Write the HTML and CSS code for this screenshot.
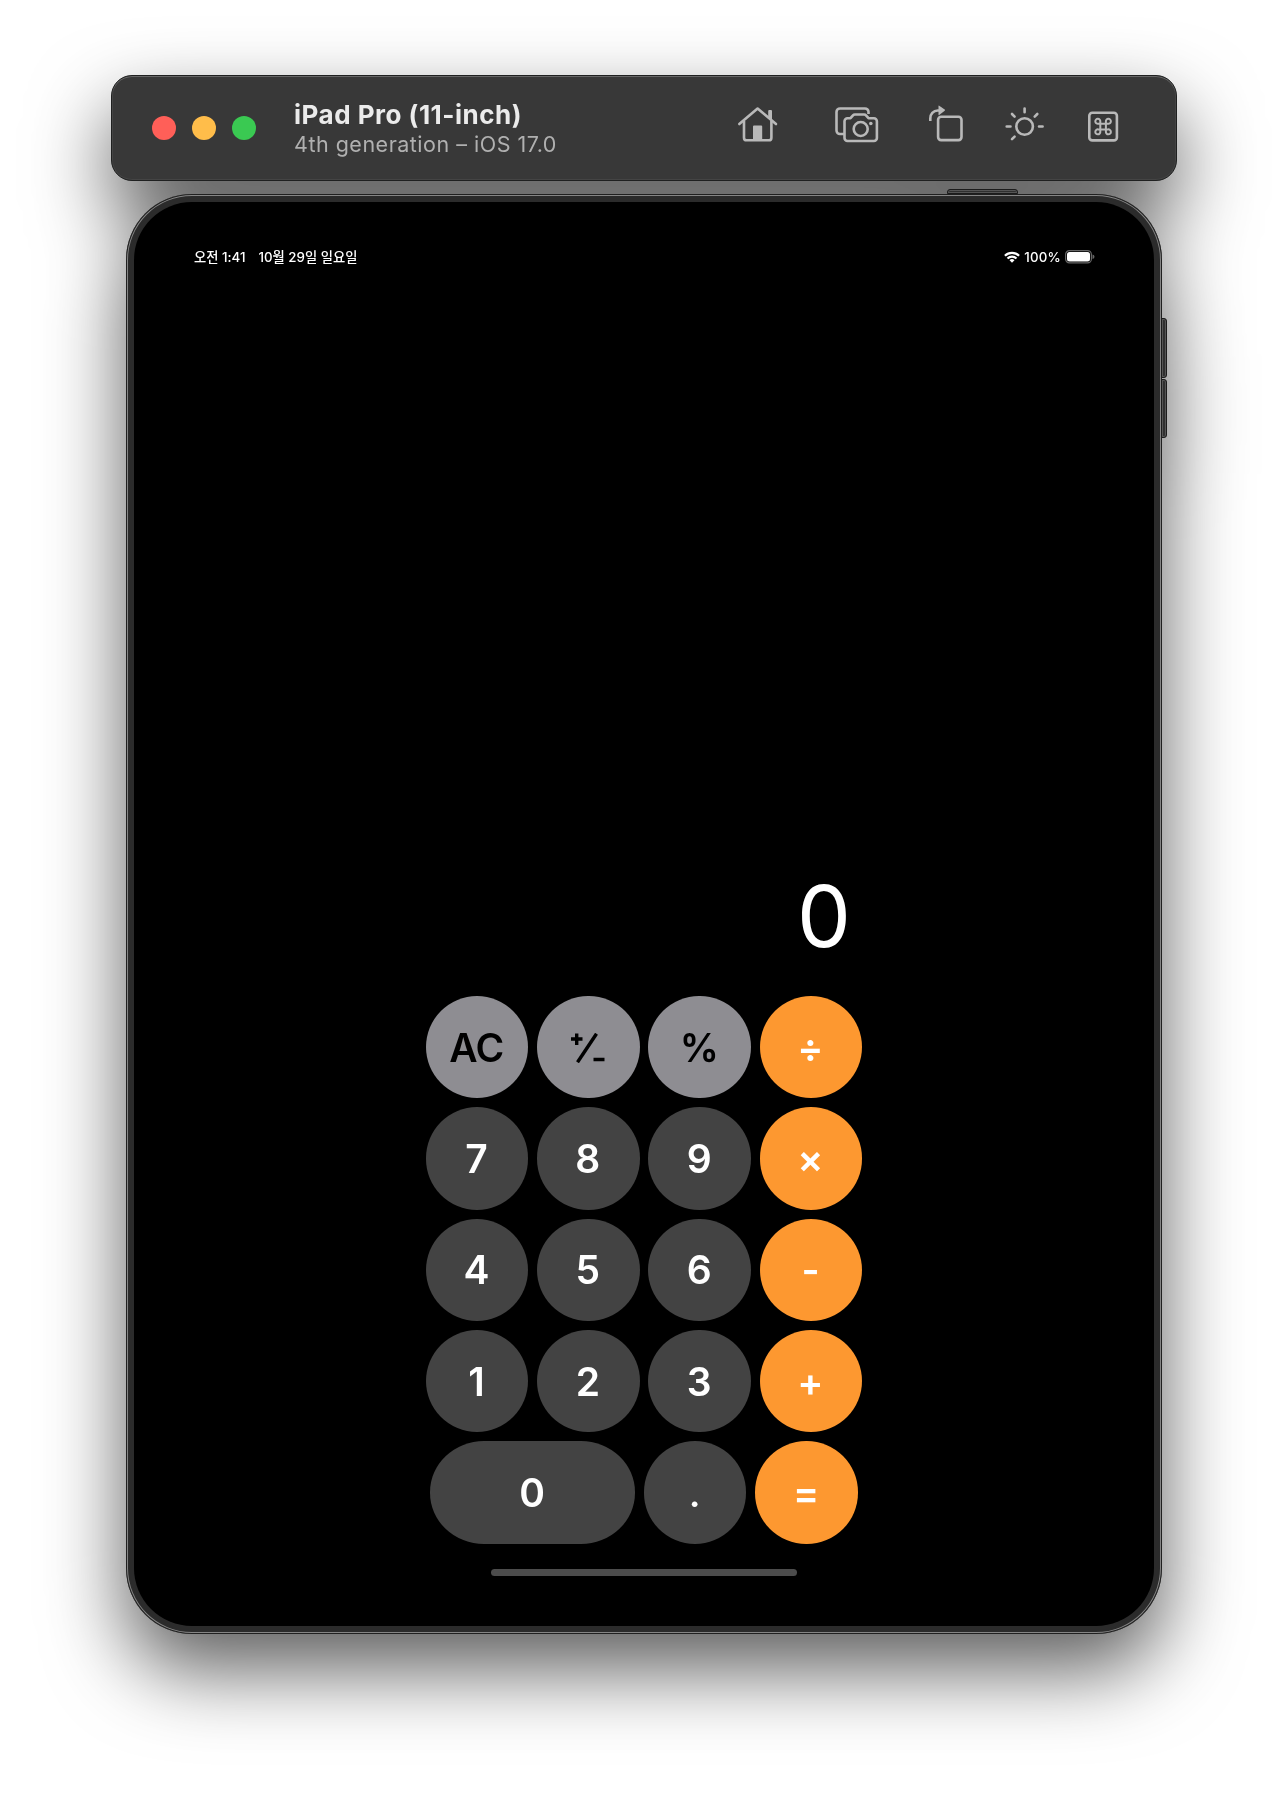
FILE: index.html
```html
<!DOCTYPE html>
<html lang="ko">
<head>
<meta charset="utf-8">
<title>Calculator</title>
<link rel="stylesheet" href="styles.css">
</head>
<body>
<main class="simulator">
  <header class="titlebar">
    <div class="lights"><span class="light close"></span><span class="light minimize"></span><span class="light expand"></span></div>
    <div class="titles">
      <h1 class="title">iPad Pro (11-inch)</h1>
      <p class="subtitle">4th generation – iOS 17.0</p>
    </div>
    <nav class="tools">
      <svg class="tool" width="40" height="40" viewBox="0 0 40 40"><path stroke-linecap="round" stroke-linejoin="round" d="M1.300 18 19.600 2.500 38 18"/><path d="M6 15V31.700a2.600 2.600 0 0 0 2.600 2.600H30.800a2.600 2.600 0 0 0 2.600-2.600V15"/><path class="solid" d="M15 20.500a1 1 0 0 1 1-1H23.200a1 1 0 0 1 1 1V34H15ZM30.200 5a1 1 0 0 1 1-1H33a1 1 0 0 1 1 1V15L30.200 12Z"/></svg>
      <svg class="tool camera" width="44" height="40" viewBox="0 0 44 40"><path d="M9 28H5a3.500 3.500 0 0 1-3.500-3.500V6A3.500 3.500 0 0 1 5 2.500H30A3.500 3.500 0 0 1 33.500 6V8"/><path stroke-linejoin="round" d="M12.500 12.200H15.500L18 9.300Q18.700 8.500 19.800 8.500H29.200Q30.300 8.500 31 9.300L33.500 12.200H38.900A3 3 0 0 1 41.900 15.200V32A3 3 0 0 1 38.900 35H12.500A3 3 0 0 1 9.500 32V15.200A3 3 0 0 1 12.500 12.200Z"/><circle cx="25.700" cy="23" r="7"/><circle class="solid" cx="35.800" cy="17.500" r="1.800"/></svg>
      <svg class="tool rotate" width="34" height="40" viewBox="0 0 34 40"><rect x="9.100" y="10.700" width="23.400" height="23.400" rx="3"/><path d="M1.300 15V12.500A7.500 7.500 0 0 1 8.800 4.500H10"/><path class="solid" d="M9.500 0Q9.500-.8 10.200-.3L15.700 3.600Q16.400 4.200 15.700 4.800L10.200 9Q9.500 9.400 9.500 8.600Z"/></svg>
      <svg class="tool sun" width="40" height="40" viewBox="0 0 40 40"><circle cx="19.600" cy="20.500" r="8.300"/><path stroke-linecap="round" d="M19.600 2.500V6.300M1.700 20.500H5.500M34 20.500H37.600M7 8 9.600 10.600M32.300 8 29.700 10.600M7 33.200 9.600 30.600"/></svg>
      <svg class="tool" width="32" height="40" viewBox="0 0 32 40"><rect x="1.300" y="6.800" width="27.600" height="27.600" rx="3"/><path class="thin" d="M12.300 17.800H17.900V23.400H12.300ZM12.300 17.800H10.200A2.500 2.500 0 1 1 12.300 15.600ZM17.900 17.800V15.600A2.500 2.500 0 1 1 20 17.800ZM12.300 23.400V25.600A2.500 2.500 0 1 1 10.200 23.400ZM17.900 23.400H20A2.500 2.500 0 1 1 17.900 25.600Z"/></svg>
    </nav>
  </header>
  <section class="device">
    <span class="button power"></span>
    <span class="button volume-up"></span>
    <span class="button volume-down"></span>
    <div class="screen">
      <div class="status">
        <span class="time">오전 1:41</span><span class="date">10월 29일 일요일</span>
        <span class="network">
          <svg width="16" height="12" viewBox="0 0 16 12"><g fill="none" stroke="#fff" stroke-width="2.200"><path d="M.9 4.700a10.300 10.300 0 0 1 14.200 0M3.500 7.500a6.500 6.500 0 0 1 9 0"/></g><path fill="#fff" d="M5.500 9.300a3.600 3.600 0 0 1 5 0L8 11.700Z"/></svg>
          <span class="percent">100%</span>
          <svg width="30" height="14" viewBox="0 0 30 14"><rect x=".6" y=".6" width="25.800" height="12.300" rx="3.800" fill="none" stroke="#666" stroke-width="1.200"/><rect x="2" y="2" width="23" height="9.500" rx="2.500" fill="#fff"/><path fill="#666" d="M27.500 4.500Q29.500 5 29.500 6.800T27.500 9Z"/></svg>
        </span>
      </div>
      <output class="display">0</output>
      <div class="keypad">
        <div class="row"><button class="key fn">AC</button><button class="key fn"><svg class="sign" width="34" height="30" viewBox="0 0 34 30"><path d="M0 6H11.500M5.700 .5V12M22.500 26.500H33.500"/><path d="M6.500 29.300 25.500 .7"/></svg></button><button class="key fn">%</button><button class="key op">÷</button></div>
        <div class="row"><button class="key">7</button><button class="key">8</button><button class="key">9</button><button class="key op">×</button></div>
        <div class="row"><button class="key">4</button><button class="key">5</button><button class="key">6</button><button class="key op">-</button></div>
        <div class="row"><button class="key">1</button><button class="key">2</button><button class="key">3</button><button class="key op">+</button></div>
        <div class="row"><button class="key wide">0</button><button class="key point">.</button><button class="key op">=</button></div>
      </div>
      <div class="home"></div>
    </div>
  </section>
</main>
</body>
</html>
```
FILE: styles.css
```css
* { box-sizing: border-box; }
body { margin: 0; background: #fff; font-family: Inter, "Noto Sans CJK KR", sans-serif; }
.simulator {
  height: 1794px; overflow: hidden; padding-top: 75px; display: flex; flex-direction: column; align-items: center;
  filter: drop-shadow(0 36px 40px rgba(0,0,0,.63));
}
.titlebar {
  position: relative; z-index: 1; width: 1066px; height: 106px; padding: 0 56px 0 40px; border-radius: 21px;
  display: flex; align-items: center; background: #383838; border: 1px solid #1f2020;
  box-shadow: inset 0 1px 0 #666, inset 0 0 0 1px #444;
}
.lights { display: flex; gap: 16px; }
.light { width: 24px; height: 24px; border-radius: 50%; }
.close { background: #ff5f58; }
.minimize { background: #ffbd4a; }
.expand { background: #3ac952; }
.titles { margin-left: 38px; padding-top: 3px; }
.title { margin: 0; font-size: 26px; line-height: 29px; font-weight: 700; color: #ebebeb; letter-spacing: .5px; white-space: nowrap; }
.subtitle { margin: 0; font-size: 21.500px; line-height: 30px; color: #b0b0b0; letter-spacing: .5px; white-space: nowrap; }
.tools { display: flex; align-items: center; margin-left: auto; padding-bottom: 4px; }
.tool { display: block; overflow: visible; fill: none; stroke: #b9b9b9; stroke-width: 2.600; }
.tool .solid { fill: #b9b9b9; stroke: none; }
.tool .thin { stroke-width: 2; }
.camera { margin-left: 57px; }
.rotate { margin-left: 50px; }
.sun { margin: 0 43px 0 42px; }
.device {
  position: relative; width: 1036px; height: 1440px; margin-top: 13px; padding: 8px; border-radius: 66px; background: #2b2b2b;
  box-shadow: inset 0 0 0 1px #202020, inset 0 0 0 2px #858585;
}
.button { position: absolute; background: #303030; border: 1px solid #1c1c1c; box-shadow: inset 0 0 0 1px #555; }
.power { left: 821px; top: -5px; width: 71px; height: 5px; border-radius: 3px 3px 0 0; }
.volume-up, .volume-down { left: 1035px; width: 6px; height: 60px; border-radius: 0 3px 3px 0; }
.volume-up { top: 124px; }
.volume-down { top: 185px; height: 59px; }
.screen { height: 1424px; border-radius: 58px; background: #000; color: #fff; display: flex; flex-direction: column; align-items: center; }
.status { width: 902px; height: 20px; margin-top: 45px; padding-left: 1px; display: flex; align-items: center; font-size: 13.300px; font-weight: 450; white-space: nowrap; line-height: 20px; }
.date { margin-left: 13px; }
.network { display: flex; align-items: center; gap: 4px; margin-left: auto; }
.percent { font-weight: 500; letter-spacing: .2px; }
.display { width: 436px; height: 104px; margin-top: 597px; padding-right: 11px; text-align: right; font-size: 85.500px; line-height: 104px; font-weight: 400; }
.keypad { display: flex; flex-direction: column; gap: 8.930px; margin-top: 28px; }
.row { display: flex; justify-content: center; gap: 8.930px; }
.key {
  width: 102.400px; height: 102.400px; padding: 1px 1px 0 0; border: 0; border-radius: 50%; display: flex; align-items: center; justify-content: center;
  background: #434343; color: #fff; font: 600 39px/46px Inter, sans-serif;
}
.fn { background: #8e8d92; color: #000; letter-spacing: -.4px; }
.op { background: #fd9830; }
.point { font-weight: 500; }
.wide { width: 204.800px; border-radius: 54px / 51.200px; }
.sign { fill: none; stroke: #000; stroke-width: 3.400; }
.home { width: 306px; height: 7px; margin-top: 25px; border-radius: 4px; background: #4c4c4c; }
```
